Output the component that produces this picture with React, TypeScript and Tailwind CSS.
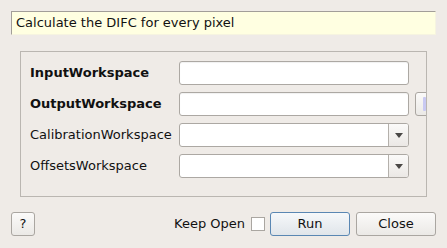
import React from 'react';

const font = { fontFamily: '"DejaVu Sans", Verdana, sans-serif' };

const TextField: React.FC = () => (
  <div className="w-[230px] h-[24px] shrink-0 bg-white border border-[#aca8a3] rounded-[3px] shadow-[inset_0_1px_1px_rgba(0,0,0,0.06)]" />
);

const ComboField: React.FC = () => (
  <div className="w-[230px] h-[24px] shrink-0 bg-white border border-[#aca8a3] rounded-[3px] flex">
    <div className="flex-1" />
    <div className="w-[20px] h-full border-l border-[#b4b0ab] bg-gradient-to-b from-[#fbfaf9] to-[#ebe8e5] rounded-r-[2px] flex items-center justify-center">
      <svg width="8" height="5" viewBox="0 0 8 5">
        <path d="M0 0 L8 0 L4 5 Z" fill="#4a4846" />
      </svg>
    </div>
  </div>
);

const Row: React.FC<{ label: string; bold?: boolean; children: React.ReactNode }> = ({ label, bold, children }) => (
  <div className="flex items-center h-[24px]">
    <div className={`w-[149px] shrink-0 whitespace-nowrap text-[13px] text-[#111] ${bold ? 'font-bold' : ''}`}>{label}</div>
    {children}
  </div>
);

const Btn: React.FC<{ className?: string; children: React.ReactNode; primary?: boolean }> = ({ className = '', children, primary }) => (
  <button
    className={`h-[24px] shrink-0 rounded-[3px] border text-[13px] text-[#111] flex items-center justify-center bg-gradient-to-b ${
      primary
        ? 'border-[#5a87b3] from-[#f6f8fa] to-[#e0e5ea]'
        : 'border-[#aaa6a1] from-[#fbfaf9] to-[#ebe9e6]'
    } ${className}`}
  >
    {children}
  </button>
);

export default function App() {
  return (
    <div style={font} className="w-[447px] h-[248px] bg-[#efebe7] px-[11px] pt-[11px] flex flex-col overflow-hidden">
      {/* Description */}
      <div className="w-[425px] h-[24px] bg-[#ffffe1] border-t border-l border-[#a29e99] border-r border-r-[#f6f4e0] border-b border-b-[#f6f4e0] pl-[4px] flex items-center text-[13px] text-[#111]">
        Calculate the DIFC for every pixel
      </div>

      {/* Properties */}
      <div className="mt-[16px] ml-[9px] w-[407px] h-[146px] border border-[#bab6b1] overflow-hidden pl-[9px] pt-[9px] flex flex-col gap-[7px]">
        <Row label="InputWorkspace" bold>
          <TextField />
        </Row>
        <Row label="OutputWorkspace" bold>
          <TextField />
          <div className="ml-[6px] w-[24px] h-[24px] shrink-0 rounded-[3px] border border-[#aaa6a1] bg-gradient-to-b from-[#fbfaf9] to-[#ebe9e6] flex items-center pl-[7px]">
            <div className="w-[3px] h-[14px] bg-[#c9c9f2] rounded-[1px]" />
          </div>
        </Row>
        <Row label="CalibrationWorkspace">
          <ComboField />
        </Row>
        <Row label="OffsetsWorkspace">
          <ComboField />
        </Row>
      </div>

      {/* Buttons */}
      <div className="mt-[15px] flex items-center">
        <Btn className="w-[24px]">?</Btn>
        <div className="flex-1" />
        <span className="text-[13px] text-[#111] mr-[6px]">Keep Open</span>
        <div className="w-[14px] h-[14px] shrink-0 bg-white border border-[#aaa6a1] mr-[5px]" />
        <Btn primary className="w-[80px]">Run</Btn>
        <Btn className="w-[80px] ml-[6px]">Close</Btn>
      </div>
    </div>
  );
}
